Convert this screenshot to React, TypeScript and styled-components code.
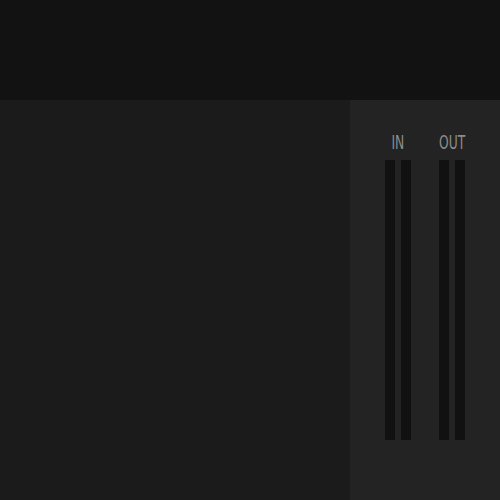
import React from "react";
import styled, { createGlobalStyle } from "styled-components";

const Global = createGlobalStyle`
  html, body { margin: 0; padding: 0; background: #121212; }
  body { width: 500px; height: 500px; overflow: hidden; }
`;

const Page = styled.div`
  width: 500px;
  height: 500px;
  display: flex;
  flex-direction: column;
`;

const TopBar = styled.div`
  height: 100px;
  background: #121212;
`;

const Body = styled.div`
  flex: 1;
  display: flex;
`;

const Main = styled.div`
  width: 350px;
  background: #1b1b1b;
`;

const Side = styled.div`
  flex: 1;
  background: #232323;
  display: flex;
  justify-content: center;
  padding-top: 32px;
  gap: 28px;
`;

const Meter = styled.div`
  display: flex;
  flex-direction: column;
  align-items: center;
  width: 26px;
`;

const Label = styled.div`
  font-family: "DejaVu Sans Condensed", "DejaVu Sans", sans-serif;
  font-size: 19px;
  line-height: 20px;
  height: 20px;
  color: #8c8c8c;
  transform: scaleX(0.72);
  white-space: nowrap;
  margin-bottom: 8px;
`;

const Bars = styled.div`
  display: flex;
  gap: 6px;
`;

const Bar = styled.div`
  width: 10px;
  height: 280px;
  background: #111111;
`;

export default function App() {
  return (
    <Page>
      <Global />
      <TopBar />
      <Body>
        <Main />
        <Side>
          {["IN", "OUT"].map((l) => (
            <Meter key={l}>
              <Label>{l}</Label>
              <Bars>
                <Bar />
                <Bar />
              </Bars>
            </Meter>
          ))}
        </Side>
      </Body>
    </Page>
  );
}
